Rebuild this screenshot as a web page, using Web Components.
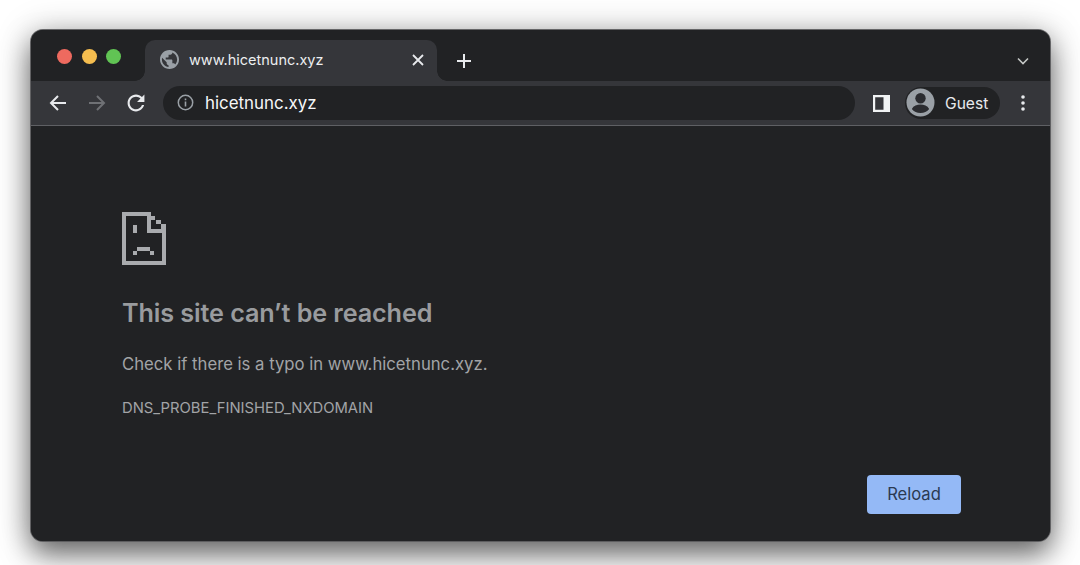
<!DOCTYPE html>
<html>
<head>
<meta charset="utf-8">
<title>This site can't be reached</title>
<style>
html, body { margin: 0; height: 100%; background: #fff; overflow: hidden; }
body { font-family: Inter, "Liberation Sans", sans-serif; }
</style>
</head>
<body>
<browser-window>
  <tab-strip slot="strip">
    <browser-tab>www.hicetnunc.xyz</browser-tab>
  </tab-strip>
  <tool-bar slot="bar">
    <omni-box>hicetnunc.xyz</omni-box>
    <profile-chip slot="chip">Guest</profile-chip>
  </tool-bar>
  <error-page>
    <span slot="title">This site can’t be reached</span>
    <span slot="message">Check if there is a typo in www.hicetnunc.xyz.</span>
    <span slot="code">DNS_PROBE_FINISHED_NXDOMAIN</span>
    <reload-button slot="action">Reload</reload-button>
  </error-page>
</browser-window>

<script>
function define(name, html) {
  customElements.define(name, class extends HTMLElement {
    constructor() {
      super();
      this.attachShadow({ mode: 'open' });
      this.shadowRoot.innerHTML = html;
    }
  });
}

define('browser-window', `
<style>
:host {
  display: flex;
  flex-direction: column;
  width: 1019px;
  height: 511px;
  margin: 30px 0 0 31px;
  border-radius: 12px;
  overflow: hidden;
  background: #212224;
  box-shadow: 0 0 0 1px rgba(90,90,92,.9), 0 14px 28px rgba(0,0,0,.5), 0 2px 34px rgba(0,0,0,.28);
}
</style>
<slot name="strip"></slot>
<slot name="bar"></slot>
<slot></slot>
`);

define('tab-strip', `
<style>
:host { display: flex; align-items: flex-end; height: 51px; background: #212224; padding-left: 26px; }
.lights { display: flex; gap: 9.5px; align-self: flex-start; margin-top: 19px; width: 88px; }
.lights i { width: 15px; height: 15px; border-radius: 50%; }
.plus { width: 54px; height: 41px; display: flex; align-items: center; justify-content: center; }
.spacer { flex: 1; }
.chev { margin: 0 20px 13px 0; display: block; }
</style>
<div class="lights">
  <i style="background:#ee6a5f"></i><i style="background:#f5bd4f"></i><i style="background:#61c454"></i>
</div>
<slot></slot>
<div class="plus">
  <svg width="16" height="16" viewBox="0 0 16 16"><path d="M8 1v14M1 8h14" stroke="#e8eaed" stroke-width="2"/></svg>
</div>
<div class="spacer"></div>
<svg class="chev" width="14" height="14" viewBox="0 0 14 14"><path d="M2 4.5l5 5 5-5" fill="none" stroke="#c4c7c5" stroke-width="1.6"/></svg>
`);

define('browser-tab', `
<style>
:host {
  display: flex;
  align-items: center;
  position: relative;
  box-sizing: border-box;
  width: 292px;
  height: 41px;
  padding: 0 13px 2px 15px;
  background: #35363a;
  border-radius: 10px 10px 0 0;
  color: #eceef0;
  font-size: 14.5px;
}
:host::before, :host::after {
  content: "";
  position: absolute;
  bottom: 0;
  width: 10px;
  height: 10px;
  background: radial-gradient(circle at 0 0, #212224 9.5px, #35363a 10px);
}
:host::before { left: -10px; }
:host::after { right: -10px; background: radial-gradient(circle at 100% 0, #212224 9.5px, #35363a 10px); }
svg.globe { margin-right: 10px; flex: none; }
.title { flex: 1; white-space: nowrap; overflow: hidden; }
svg.close { flex: none; }
</style>
<svg class="globe" width="19" height="19" viewBox="2 2 20 20"><path fill="#9aa0a6" d="M12 2C6.48 2 2 6.48 2 12s4.48 10 10 10 10-4.48 10-10S17.52 2 12 2zm-1 17.93c-3.95-.49-7-3.85-7-7.93 0-.62.08-1.21.21-1.79L9 15v1c0 1.1.9 2 2 2v1.93zm6.9-2.54c-.26-.81-1-1.39-1.9-1.39h-1v-3c0-.55-.45-1-1-1H8v-2h2c.55 0 1-.45 1-1V7h2c1.1 0 2-.9 2-2v-.41c2.93 1.19 5 4.06 5 7.41 0 2.08-.8 3.97-2.1 5.39z"/></svg>
<span class="title"><slot></slot></span>
<svg class="close" width="12" height="12" viewBox="0 0 12 12"><path d="M1 1l10 10M11 1L1 11" stroke="#e8eaed" stroke-width="1.8"/></svg>
`);

define('tool-bar', `
<style>
:host {
  display: flex;
  align-items: center;
  box-sizing: border-box;
  height: 45px;
  padding: 0 0 1px 17px;
  background: #35363a;
  border-bottom: 1px solid #5f6064;
}
svg { display: block; flex: none; }
.nav { display: flex; align-items: center; gap: 19px; margin-right: 17px; }
.panel { margin: 1px 15px 0 18px; }
.dots { margin: 0 25px 0 21px; }
</style>
<div class="nav">
  <svg width="20" height="20" viewBox="0 0 20 20"><path d="M18 10H3M10 3l-7 7 7 7" fill="none" stroke="#e8eaed" stroke-width="2"/></svg>
  <svg width="20" height="20" viewBox="0 0 20 20"><path d="M2 10h15M10 3l7 7-7 7" fill="none" stroke="#6f7175" stroke-width="2"/></svg>
  <svg width="20" height="20" viewBox="2.5 2.5 19 19"><path fill="#e8eaed" d="M17.65 6.35C16.2 4.9 14.21 4 12 4c-4.42 0-7.99 3.58-7.99 8s3.57 8 7.99 8c3.73 0 6.84-2.55 7.73-6h-2.08c-.82 2.33-3.04 4-5.65 4-3.31 0-6-2.69-6-6s2.69-6 6-6c1.66 0 3.14.69 4.22 1.78L13 11h7V4l-2.35 2.35z"/></svg>
</div>
<slot></slot>
<svg class="panel" width="17" height="17" viewBox="0 0 17 17"><path fill-rule="evenodd" fill="#f1f3f4" d="M0 0h17v17H0zM2.2 2.2v12.6h8.3V2.2z"/></svg>
<slot name="chip"></slot>
<svg class="dots" width="4" height="16" viewBox="0 0 4 16"><g fill="#e8eaed"><circle cx="2" cy="2" r="1.8"/><circle cx="2" cy="8" r="1.8"/><circle cx="2" cy="14" r="1.8"/></g></svg>
`);

define('omni-box', `
<style>
:host {
  display: flex;
  align-items: center;
  box-sizing: border-box;
  flex: none;
  width: 692px;
  height: 34px;
  padding-left: 14px;
  border-radius: 17px;
  background: #212224;
  color: #f6f7f8;
  font-size: 16.9px;
}
svg { margin-right: 11px; display: block; }
</style>
<svg width="17" height="17" viewBox="0 0 17 17"><circle cx="8.5" cy="8.5" r="7.2" fill="none" stroke="#9aa0a6" stroke-width="1.5"/><path d="M8.5 7.4v5M8.5 4.6v1.6" stroke="#9aa0a6" stroke-width="1.6"/></svg>
<slot></slot>
`);

define('profile-chip', `
<style>
:host {
  display: flex;
  align-items: center;
  box-sizing: border-box;
  flex: none;
  width: 95px;
  height: 32px;
  padding-left: 1px;
  border-radius: 16px;
  background: #212224;
  color: #e8eaed;
  font-size: 15.6px;
}
span { padding-top: 1px; }
svg { margin-right: 10px; display: block; flex: none; }
</style>
<svg width="29" height="29" viewBox="0 0 29 29"><circle cx="14.5" cy="14.5" r="14" fill="#9aa0a6"/><circle cx="14.5" cy="10.2" r="5.2" fill="#2b2c30"/><path d="M5.8 21c1.8-3.2 5.2-4.4 8.7-4.4s6.9 1.2 8.7 4.4c-2 2.6-5.2 4-8.7 4s-6.7-1.4-8.7-4z" fill="#2b2c30"/></svg>
<span><slot></slot></span>
`);

define('error-page', `
<style>
:host {
  display: flex;
  flex-direction: column;
  flex: 1;
  padding: 86px 89px 0 91px;
  background: #212224;
  color: #a2a4a7;
}
svg { display: block; }
h1 { margin: 31px 0 0; font-size: 25.2px; line-height: 34px; font-weight: 600; color: #999b9e; letter-spacing: -.1px; }
p { margin: 23px 0 0; font-size: 16.7px; line-height: 22px; }
.code { margin-top: 23px; font-size: 14.8px; line-height: 20px; }
.actions { display: flex; justify-content: flex-end; margin-top: 57px; }
</style>
<svg width="44" height="53" viewBox="0 0 44 53" fill="#a9abae">
  <path d="M0 0h29v4H4v45h36V21H25V4h4v13h15v36H0z"/>
  <path d="M29 4h4v4h-4zM34 8h5v4h-5zM39 12h5v5h-5z"/>
  <path d="M11 13h4v8h-4zM15 35h13v4H15zM11 39h4v4h-4zM28 39h4v4h-4z"/>
</svg>
<h1><slot name="title"></slot></h1>
<p><slot name="message"></slot></p>
<div class="code"><slot name="code"></slot></div>
<div class="actions"><slot name="action"></slot></div>
`);

define('reload-button', `
<style>
:host {
  display: flex;
  align-items: center;
  justify-content: center;
  width: 94px;
  height: 39px;
  border-radius: 4px;
  background: #94b9f6;
  color: #2b3a52;
  font-size: 16.6px;
  padding-bottom: 1px;
  box-sizing: border-box;
}
</style>
<slot></slot>
`);
</script>
</body>
</html>
